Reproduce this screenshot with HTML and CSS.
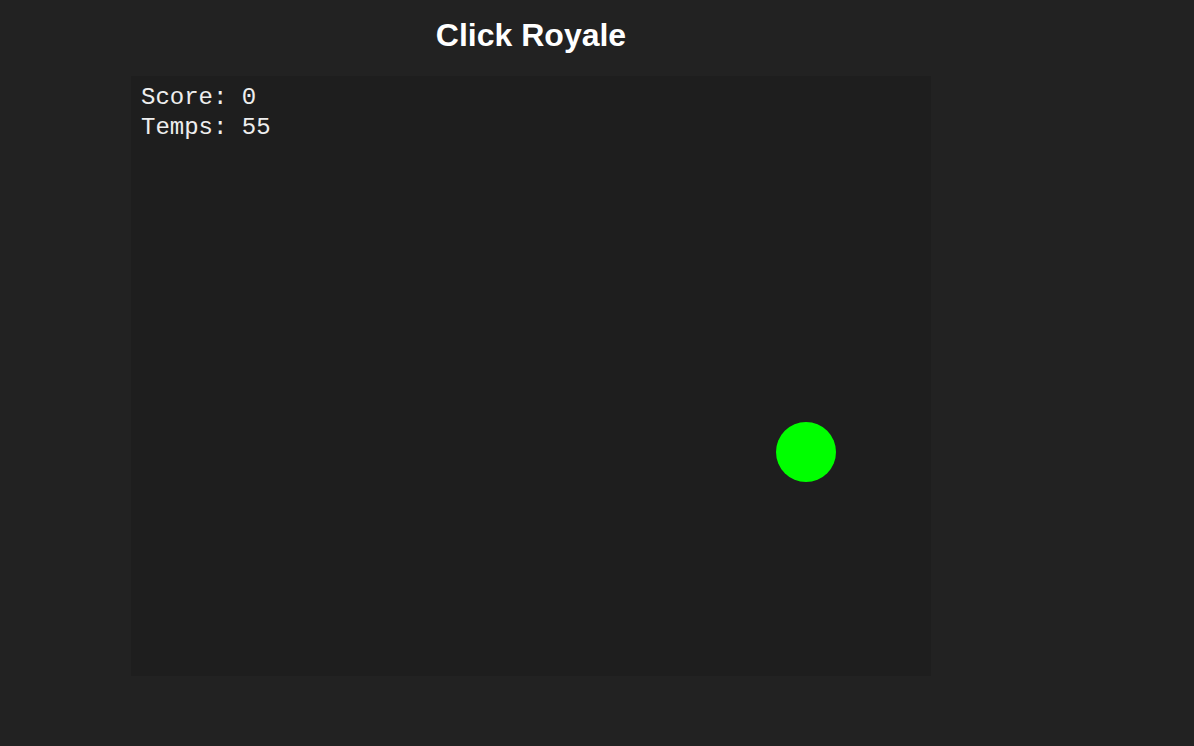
FILE: index.html
```html
<!DOCTYPE html>
<html lang="fr">
<head>
<meta charset="utf-8">
<title>Click Royale</title>
<link rel="stylesheet" href="styles.css">
</head>
<body>
<main class="page">
  <header class="header">
    <h1 class="title">Click Royale</h1>
  </header>
  <section class="game">
    <div class="hud">
      <div class="hud-line">Score: 0</div>
      <div class="hud-line">Temps: 55</div>
    </div>
    <div class="target" style="left: 645px; top: 346px;"></div>
  </section>
</main>
</body>
</html>
```
FILE: styles.css
```css
html, body {
  margin: 0;
  padding: 0;
  background: #222222;
}
body {
  width: 1194px;
  height: 746px;
  overflow: hidden;
}
.page {
  width: 800px;
  padding-left: 131px;
}
.header {
  height: 76px;
  padding-top: 17px;
  box-sizing: border-box;
  text-align: center;
}
.title {
  margin: 0;
  font-family: "Liberation Sans", Arial, sans-serif;
  font-weight: bold;
  font-size: 32px;
  line-height: 37px;
  color: #ffffff;
}
.game {
  position: relative;
  width: 800px;
  height: 600px;
  background: #1e1e1e;
}
.hud {
  padding: 7px 0 0 10px;
  font-family: "Liberation Mono", "Courier New", monospace;
  font-size: 24px;
  line-height: 30px;
  color: #eeeeee;
}
.target {
  position: absolute;
  width: 60px;
  height: 60px;
  border-radius: 50%;
  background: #00ff00;
}
```
